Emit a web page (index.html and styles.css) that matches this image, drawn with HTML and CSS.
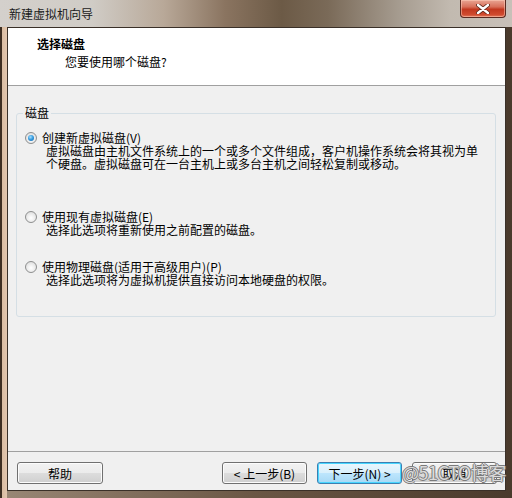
FILE: index.html
```html
<!DOCTYPE html>
<html lang="zh-CN">

<head>
    <meta charset="UTF-8">
    <title>新建虚拟机向导</title>
    <link rel="stylesheet" href="styles.css">
</head>

<body>
    <div class="window">
        <div class="titlebar">
            <span class="title">新建虚拟机向导</span>
            <button type="button" class="close" aria-label="关闭">
                <svg width="14" height="10" viewBox="0 0 14 10">
                    <path d="M2 1 L12 9 M12 1 L2 9" stroke="#5a2418" stroke-width="4" stroke-linecap="round" />
                    <path d="M2 1 L12 9 M12 1 L2 9" stroke="#ffffff" stroke-width="2.4" stroke-linecap="round" />
                </svg>
            </button>
        </div>

        <div class="client">
            <div class="header">
                <div class="header-title">选择磁盘</div>
                <div class="header-sub">您要使用哪个磁盘?</div>
            </div>

            <div class="main">
                <fieldset class="group">
                    <legend>磁盘</legend>

                    <div class="option opt-create">
                        <div class="option-row">
                            <span class="radio checked"></span>
                            <span>创建新虚拟磁盘(V)</span>
                        </div>
                        <div class="desc">虚拟磁盘由主机文件系统上的一个或多个文件组成，客户机操作系统会将其视为单个硬盘。虚拟磁盘可在一台主机上或多台主机之间轻松复制或移动。</div>
                    </div>

                    <div class="option opt-existing">
                        <div class="option-row">
                            <span class="radio"></span>
                            <span>使用现有虚拟磁盘(E)</span>
                        </div>
                        <div class="desc">选择此选项将重新使用之前配置的磁盘。</div>
                    </div>

                    <div class="option">
                        <div class="option-row">
                            <span class="radio"></span>
                            <span>使用物理磁盘(适用于高级用户)(P)</span>
                        </div>
                        <div class="desc">选择此选项将为虚拟机提供直接访问本地硬盘的权限。</div>
                    </div>
                </fieldset>
            </div>

            <div class="footer">
                <button type="button" class="btn btn-help">帮助</button>
                <div class="nav">
                    <button type="button" class="btn">&lt; 上一步(B)</button>
                    <button type="button" class="btn btn-default">下一步(N) &gt;</button>
                    <button type="button" class="btn">取消</button>
                </div>
            </div>
        </div>

        <span class="watermark">@51CTO博客</span>
    </div>
</body>

</html>
```

FILE: styles.css
```css
* {
    box-sizing: border-box;
}

body {
    margin: 0;
    width: 512px;
    height: 498px;
    overflow: hidden;
    font-family: "Noto Sans CJK SC", "DejaVu Sans", sans-serif;
    font-size: 12px;
    color: #000;
}

.window {
    position: relative;
    width: 512px;
    height: 498px;
    padding: 0 6px 7px 7px;
    display: flex;
    flex-direction: column;
    background:
        linear-gradient(to right, #3e2e22 0, #3e2e22 2px, #d9bca2 2px, #e2c6ae 7px, transparent 7px),
        linear-gradient(to right, #9a8876, #6a5644 50%, #4a3a2c);
}

.titlebar {
    height: 27px;
    display: flex;
    align-items: flex-start;
    margin: 0 -6px 0 -7px;
    padding: 0 6px 0 9px;
    background: linear-gradient(to right, #d4d0cc 0, #d0ccc6 18%, #b8a898 32%, #8a7460 44%, #6c5a46 55%, #7a6a58 64%, #a69c90 78%, #c2bab0 88%, #c8c0b8 100%);
}

.title {
    line-height: 16px;
    margin-top: 6px;
    color: #1a1a1a;
    font-size: 12px;
}

.close {
    margin-left: auto;
    width: 46px;
    height: 18px;
    padding: 0;
    border: 1px solid #5a2a20;
    border-top: none;
    border-radius: 0 0 4px 4px;
    background: linear-gradient(to bottom, #e9a593 0, #d8705a 40%, #c2381f 55%, #cf4a2e 85%, #e2785c 100%);
    box-shadow: inset 0 0 0 1px rgba(255, 210, 190, 0.5);
    display: flex;
    align-items: center;
    justify-content: center;
}

.client {
    flex: 1;
    display: flex;
    flex-direction: column;
    border: 1px solid #3a3028;
    background: #f0f0f0;
}

.header {
    height: 58px;
    background: #fff;
    border-bottom: 1px solid #a0a0a0;
    padding: 8px 0 0 29px;
}

.header-title {
    font-weight: bold;
    line-height: 16px;
}

.header-sub {
    line-height: 16px;
    margin-top: 2px;
    padding-left: 28px;
}

.main {
    flex: 1;
    padding: 19px 9px 0 8px;
}

.group {
    margin: 0;
    border: 1px solid #d5dfe5;
    border-radius: 3px;
    padding: 10px 8px 30px 8px;
}

.group legend {
    padding: 0 2px;
    margin-left: -2px;
    line-height: 16px;
}

.option-row {
    display: flex;
    align-items: center;
    gap: 5px;
    line-height: 13px;
    height: 13px;
}

.desc {
    padding-left: 21px;
    line-height: 13px;
    width: 462px;
}

.opt-create {
    margin-bottom: 40px;
}

.opt-existing {
    margin-bottom: 24px;
}

.radio {
    width: 12px;
    height: 12px;
    border-radius: 50%;
    border: 1px solid #8e8f8f;
    background: radial-gradient(circle at 50% 60%, #ffffff 0, #f0f0f0 40%, #d4d4d4 100%);
    display: flex;
    align-items: center;
    justify-content: center;
    flex: none;
}

.radio.checked::after {
    content: "";
    width: 6px;
    height: 6px;
    border-radius: 50%;
    background: radial-gradient(circle at 40% 35%, #a8e0ff 0, #3a9ee0 45%, #0a5ea8 100%);
}

.footer {
    height: 39px;
    border-top: 1px solid #a0a0a0;
    padding: 10px 8px 0 9px;
    display: flex;
    align-items: flex-start;
}

.nav {
    margin-left: auto;
    display: flex;
    gap: 10px;
}

.btn {
    width: 85px;
    height: 22px;
    padding: 0;
    font-family: inherit;
    font-size: 12px;
    color: #000;
    border: 1px solid #707070;
    border-radius: 3px;
    background: linear-gradient(to bottom, #f2f2f2 0, #ebebeb 50%, #dddddd 50%, #cfcfcf 100%);
    box-shadow: inset 0 0 0 1px #fcfcfc;
}

.btn-help {
    width: 86px;
}

.btn-default {
    border-color: #3c7fb1;
    background: linear-gradient(to bottom, #eaf6fd 0, #d9f0fc 50%, #bee6fd 50%, #a7d9f5 100%);
    box-shadow: inset 0 0 0 1px #48d6ff;
}

.watermark {
    position: absolute;
    left: 402px;
    top: 459px;
    font-size: 18px;
    line-height: 26px;
    color: rgba(238, 238, 238, 0.85);
    text-shadow: 1px 0 0 #7a7a7a, -1px 0 0 #7a7a7a, 0 1px 0 #7a7a7a, 0 -1px 0 #7a7a7a;
    letter-spacing: -0.5px;
}
```
